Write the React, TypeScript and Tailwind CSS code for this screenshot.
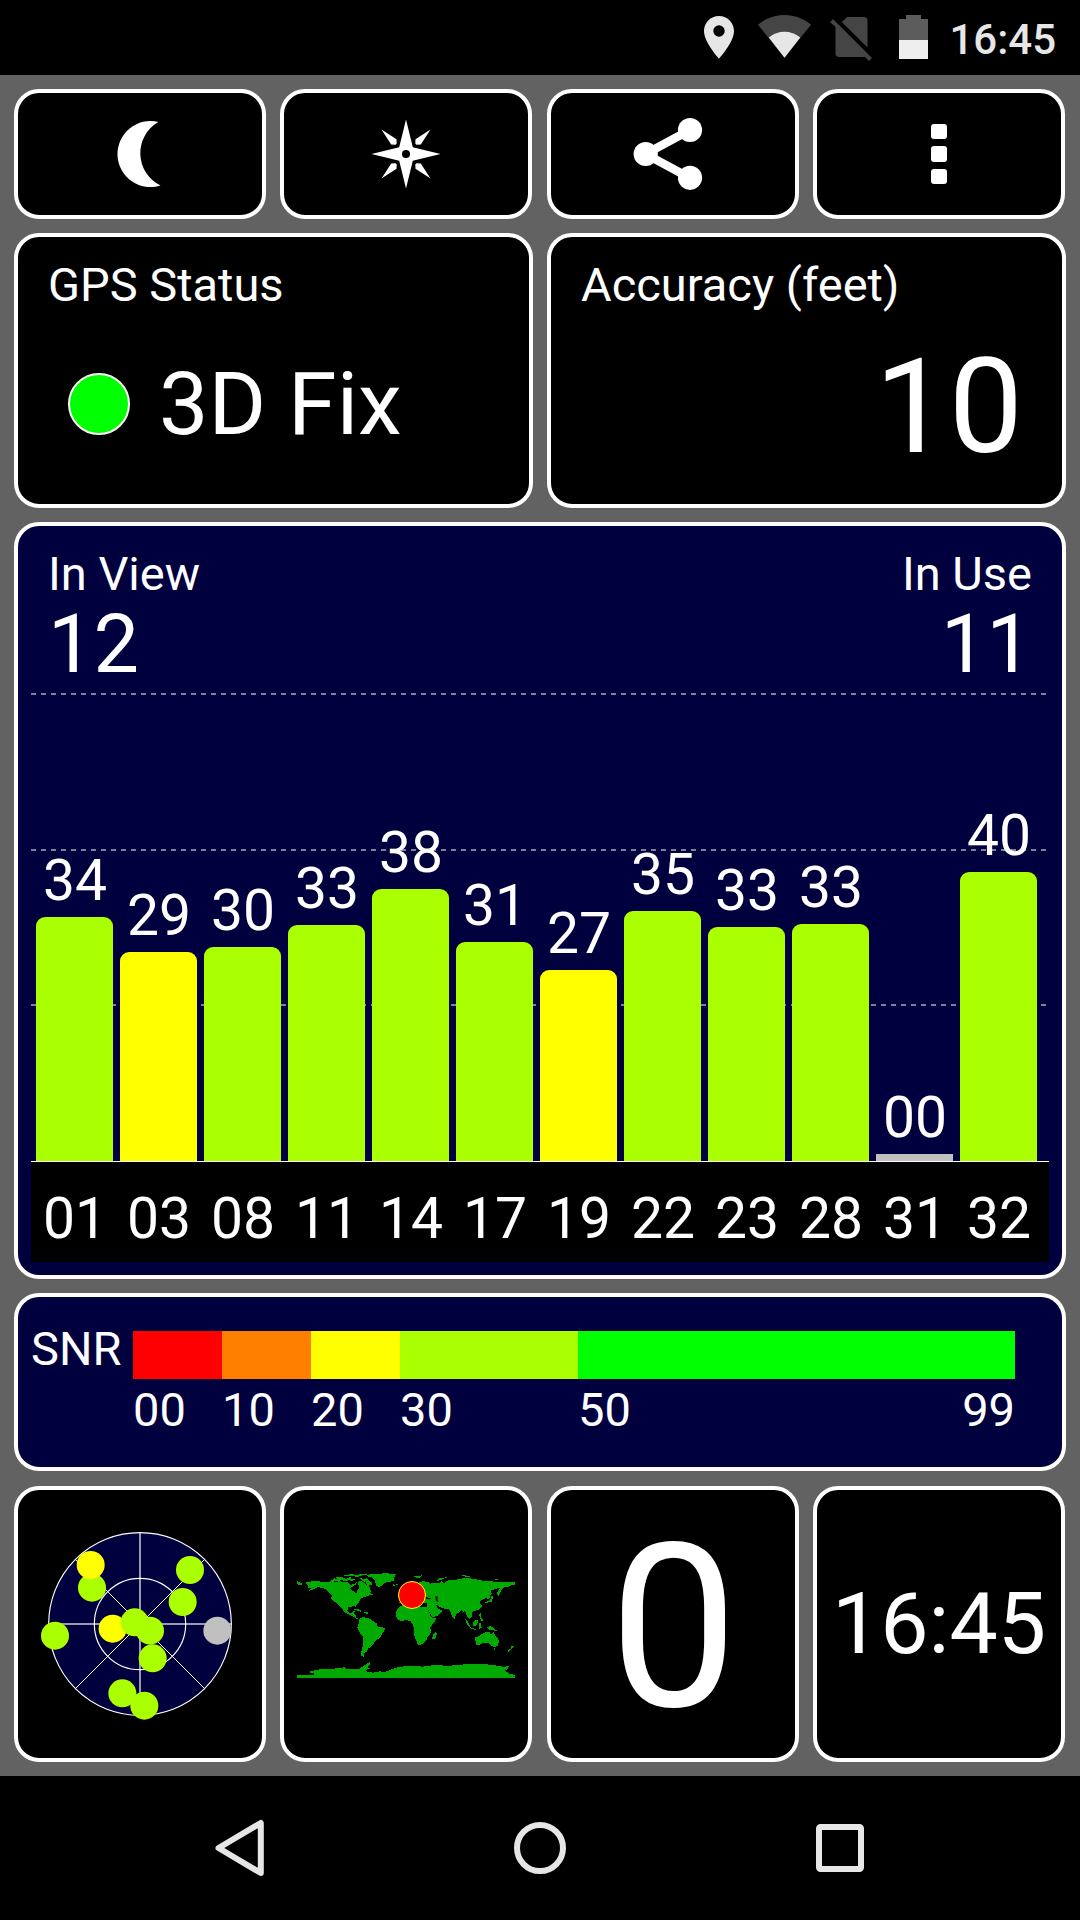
import type { ReactNode } from "react";
import clsx from "clsx";

type Satellite = {
  prn: string;
  snr: string;
  height: number;
  color: string;
};

const satellites: Satellite[] = [
  { prn: "01", snr: "34", height: 244, color: "bg-[#aaff00]" },
  { prn: "03", snr: "29", height: 209, color: "bg-[#ffff00]" },
  { prn: "08", snr: "30", height: 214, color: "bg-[#aaff00]" },
  { prn: "11", snr: "33", height: 236, color: "bg-[#aaff00]" },
  { prn: "14", snr: "38", height: 272, color: "bg-[#aaff00]" },
  { prn: "17", snr: "31", height: 219, color: "bg-[#aaff00]" },
  { prn: "19", snr: "27", height: 191, color: "bg-[#ffff00]" },
  { prn: "22", snr: "35", height: 250, color: "bg-[#aaff00]" },
  { prn: "23", snr: "33", height: 234, color: "bg-[#aaff00]" },
  { prn: "28", snr: "33", height: 237, color: "bg-[#aaff00]" },
  { prn: "31", snr: "00", height: 7, color: "bg-[#c0c0c0]" },
  { prn: "32", snr: "40", height: 289, color: "bg-[#aaff00]" },
];

const skyDots = [
  { x: 276, y: 323, fill: "#aaff00" },
  { x: 272, y: 255, fill: "#ffff00" },
  { x: 570, y: 270, fill: "#aaff00" },
  { x: 548, y: 366, fill: "#aaff00" },
  { x: 165, y: 467, fill: "#aaff00" },
  { x: 338, y: 446, fill: "#ffff00" },
  { x: 404, y: 427, fill: "#aaff00" },
  { x: 450, y: 452, fill: "#aaff00" },
  { x: 458, y: 535, fill: "#aaff00" },
  { x: 652, y: 452, fill: "#c0c0c0" },
  { x: 367, y: 640, fill: "#aaff00" },
  { x: 433, y: 677, fill: "#aaff00" },
];

const land = [
  // North America
  "M78 127 100 123 150 127 180 124 205 127 212 135 225 130 232 126 228 133 218 140 210 145 213 151 222 154 229 160 232 152 236 146 237 138 232 132 236 124 245 124 255 130 262 138 264 130 270 145 273 152 270 158 281 166 272 164 262 168 250 172 240 178 238 186 228 195 228 200 220 199 205 202 202 212 207 218 215 218 220 213 226 214 220 222 228 224 228 232 236 236 232 238 220 230 203 222 190 214 186 204 175 196 165 186 154 178 155 165 145 155 138 148 125 143 112 142 103 147 90 152 82 155 95 146 82 142 84 135 78 132Z",
  "M51 120 55 126 68 131 66 135 51 133Z",
  "M150 125 163 115 172 118 168 112 185 110 190 115 200 116 212 111 214 117 225 118 215 123 205 120 198 125 185 119 175 124Z",
  "M183 108 210 103 235 104 250 101 262 103 240 108 230 112 222 107 205 109Z",
  "M238 114 252 117 260 115 268 124 275 127 276 136 262 134 256 126 245 122Z",
  // Greenland, Iceland
  "M258 104 290 102 320 99 330 101 347 103 343 112 341 122 330 125 316 128 308 136 297 141 288 136 285 122 275 112 262 109Z",
  "M337 132 345 134 353 132 352 136 340 137Z",
  // Caribbean
  "M222 208 232 206 240 210 247 214 240 215 230 211Z",
  "M250 216 262 217 270 220 258 221Z",
  // South America
  "M238 236 250 231 268 236 278 243 290 250 293 260 308 262 316 266 310 276 305 283 301 293 288 300 282 310 275 318 265 325 260 335 254 338 252 345 253 351 242 346 244 335 247 325 250 308 250 290 240 280 232 262 237 248Z",
  // Africa
  "M358 200 372 194 395 192 412 195 420 200 440 200 447 215 452 228 458 234 471 233 462 248 450 262 453 274 449 284 442 292 438 303 428 313 414 315 408 300 402 285 403 268 398 252 390 242 375 241 362 244 354 238 348 228 350 210Z",
  "M468 275 471 282 465 298 457 297 458 285Z",
  // Eurasia
  "M358 190 360 178 372 176 378 165 395 150 410 130 430 123 450 128 452 134 456 128 480 128 484 123 492 129 500 122 520 120 540 117 560 113 580 117 600 120 610 123 630 122 650 127 670 125 705 126 705 135 695 135 685 141 672 142 664 152 655 168 650 162 660 143 645 148 632 150 635 160 630 168 628 176 616 175 602 181 600 190 606 198 598 208 585 212 577 215 574 222 577 230 568 238 562 230 557 220 556 214 550 215 546 210 540 215 530 222 524 230 524 238 517 232 508 208 500 206 485 205 470 194 468 196 474 205 488 212 475 226 457 232 448 215 440 203 440 190 425 188 415 180 400 180 380 190Z",
  // Japan
  "M632 168 640 170 637 180 635 186 622 188 612 190 624 183 632 178Z",
  // Southeast Asia
  "M556 238 564 246 574 264 568 262 560 250Z",
  "M575 264 590 267 588 270 574 267Z",
  "M578 247 592 238 594 246 588 258 580 257Z",
  "M597 222 602 220 604 234 610 240 606 246 600 236Z",
  "M596 248 604 248 602 256 606 262 598 268Z",
  "M613 256 622 261 630 258 643 265 645 268 653 274 640 271 630 270 622 265Z",
  // Australia, Tasmania, New Zealand
  "M586 292 600 287 610 279 620 275 628 276 634 284 640 274 646 287 655 297 657 306 652 318 645 322 634 317 626 310 612 308 595 315 587 313Z",
  "M641 325 648 326 645 331Z",
  "M695 315 702 320 696 327 685 336 682 333 692 326Z",
  // Arctic islands
  "M400 108 412 109 427 106 418 113 408 113Z",
  "M468 124 475 116 490 113 503 112 488 117 477 122Z",
  "M543 106 555 106 570 109 562 112Z",
  "M640 116 655 118 648 121Z",
  // Antarctica
  "M51 405 100 405 103 401 85 396 98 392 120 388 160 386 195 382 200 386 240 386 250 378 270 366 272 372 262 380 270 386 255 390 262 396 280 398 300 394 312 396 330 390 360 380 400 378 430 380 470 374 500 378 540 374 600 371 640 375 670 380 686 379 682 388 675 392 690 402 705 405 705 414 51 414Z",
].join("");

function Card({ className, children }: { className?: string; children?: ReactNode }) {
  return (
    <div className={clsx("rounded-[25px] border-4 border-white", className)}>{children}</div>
  );
}

function StatusBar() {
  return (
    <header className="flex h-[75px] bg-black pl-[703px] text-[#e6e6e6]">
      <svg className="mt-4 h-[43px] w-[31px]" viewBox="0 0 31 43">
        <path
          fill="#e6e6e6"
          fillRule="evenodd"
          d="M16 0C7.400 0 1 6.800 1 15c0 11.400 15 27.700 15 27.700S31 26.400 31 15C31 6.800 24.600 0 16 0zm0 9.300a5.700 5.700 0 1 1 0 11.400 5.700 5.700 0 0 1 0-11.400z"
        />
      </svg>
      <svg className="mt-[15px] ml-6 h-[43px] w-[53px]" viewBox="0 0 53 43">
        <path fill="#454545" d="M26.500 42.700 0 9.700C7.500 3.500 16.500 0 26.500 0S45.500 3.500 53 9.700z" />
        <path fill="#e6e6e6" d="M26.500 42.700 10.800 22.400c4.600-3.600 10-5.600 15.700-5.600s11.100 2 15.700 5.600z" />
      </svg>
      <svg className="mt-4 ml-[19px] h-[46px] w-[43px]" viewBox="0 0 43 46">
        <path fill="#454545" d="M17 1h17c2 0 3.500 1.500 3.500 3.500V31.500L11.800 6z" />
        <path fill="#454545" d="M3 3 42 42l-3 3-4-4H9c-2 0-3.500-1.500-3.500-3.500V11L0 6z" />
      </svg>
      <svg className="mt-[15px] ml-[26px] h-11 w-[29px]" viewBox="0 0 29 44">
        <path fill="#5c5c5c" d="M0 4h7V0h15v4h7v21H0z" />
        <path fill="#eeeeee" d="M0 25h29v19H0z" />
      </svg>
      <span className="ml-[21.5px] pt-[15px] text-[42px] leading-[50px] font-medium">16:45</span>
    </header>
  );
}

function Toolbar() {
  return (
    <div className="mr-px grid h-[130px] grid-cols-4 gap-[14.4px]">
      <Card className="flex items-center justify-center bg-black">
        <svg className="size-20" viewBox="-40 -40 80 80" fill="white">
          <path d="M18.300 -32A33 33 0 1 0 20.500 31.500A36 36 0 0 1 18.300 -32Z" />
        </svg>
      </Card>
      <Card className="flex items-center justify-center bg-black">
        <svg className="size-20" viewBox="-40 -40 80 80" fill="white">
          <path d="M0 -34.500 6.800 -6.800 34.500 0 6.800 6.800 0 34.500 -6.800 6.800 -34.500 0 -6.800 -6.800Z" />
          {[0, 90, 180, 270].map((angle) => (
            <path
              key={angle}
              transform={`rotate(${angle})`}
              d="M-24.500 -24.500 -9.500 -14.800 -9.300 -10.500 -10.500 -9.300 -14.800 -9.500Z"
            />
          ))}
          <circle r="4" fill="black" />
        </svg>
      </Card>
      <Card className="flex items-center justify-center bg-black">
        <svg className="size-20" viewBox="-40 -40 80 80" fill="white">
          <path d="M17 -24 -27.500 0 17 24" fill="none" stroke="white" strokeWidth="8.500" />
          <circle cx="-27.300" cy="0" r="12.100" />
          <circle cx="17" cy="-24" r="12.100" />
          <circle cx="17" cy="23.800" r="12.100" />
        </svg>
      </Card>
      <Card className="flex flex-col items-center justify-center gap-[7px] bg-black">
        <span className="size-[15.4px] rounded-[3px] bg-white" />
        <span className="size-[15.4px] rounded-[3px] bg-white" />
        <span className="size-[15.4px] rounded-[3px] bg-white" />
      </Card>
    </div>
  );
}

function Readouts() {
  return (
    <div className="grid h-[275px] grid-cols-2 gap-[14px]">
      <Card className="bg-black pt-5 pl-[30px]">
        <div className="text-[47px] leading-[56px]">GPS Status</div>
        <div className="mt-[39px] flex items-center pl-5">
          <span className="size-[62px] rounded-full border-2 border-white bg-[#00ff00]" />
          <span className="ml-[29px] text-[88px] leading-[104px]">3D Fix</span>
        </div>
      </Card>
      <Card className="bg-black pt-5 pr-[39px] pl-[30px]">
        <div className="text-[47px] leading-[56px]">Accuracy (feet)</div>
        <div className="mt-[14px] text-right text-[132px] leading-[160px]">10</div>
      </Card>
    </div>
  );
}

function SignalChart() {
  return (
    <Card className="h-[757px] bg-[#00003f] px-[13px] pb-[13px]">
      {/* Counters */}
      <div className="flex h-[167px] justify-between pt-5 pr-[17px] pl-[17px]">
        <div>
          <div className="text-[47px] leading-[56px]">In View</div>
          <div className="text-[81px] leading-[86px]">12</div>
        </div>
        <div className="text-right">
          <div className="text-[47px] leading-[56px]">In Use</div>
          <div className="text-[81px] leading-[86px]">11</div>
        </div>
      </div>

      {/* Bars */}
      <div className="relative flex h-[468px] items-end gap-[7px] pl-[5px]">
        <svg className="absolute top-0 left-0 h-[468px] w-[1018px]" viewBox="0 0 1018 468">
          {[1, 157, 312].map((y) => (
            <line
              key={y}
              x1="0"
              x2="1015"
              y1={y}
              y2={y}
              stroke="#7f7f9f"
              strokeWidth="2"
              strokeDasharray="5 5"
            />
          ))}
        </svg>
        {satellites.map((sat) => (
          <div key={sat.prn} className="relative w-[77px] text-center">
            <div className="pb-[2px] pl-px text-[57px] leading-[68px]">{sat.snr}</div>
            <div
              className={clsx(sat.snr !== "00" && "rounded-t-[9px]", sat.color)}
              style={{ height: sat.height }}
            />
          </div>
        ))}
      </div>

      {/* PRN axis */}
      <div className="flex h-[101px] items-center gap-[7px] border-t border-white bg-black pt-[14px] pl-[5px]">
        {satellites.map((sat) => (
          <div key={sat.prn} className="w-[77px] pl-px text-center text-[57px] leading-[68px]">
            {sat.prn}
          </div>
        ))}
      </div>
    </Card>
  );
}

function SnrLegend() {
  const bands = [
    { from: "00", className: "w-[89px]", color: "bg-[#ff0000]" },
    { from: "10", className: "w-[89px]", color: "bg-[#ff8000]" },
    { from: "20", className: "w-[89px]", color: "bg-[#ffff00]" },
    { from: "30", className: "w-[178px]", color: "bg-[#aaff00]" },
    { from: "50", className: "flex-1", color: "bg-[#00ff00]" },
  ];

  return (
    <Card className="flex h-[178px] bg-[#00003f] pt-[34px] pr-[47px] pl-[13px] text-[47px]">
      <div className="w-[102px] leading-[36px]">SNR</div>
      <div className="flex flex-1">
        {bands.map((band) => (
          <div key={band.from} className={band.className}>
            <div className={clsx("h-12", band.color)} />
            <div className="flex justify-between pt-[3px] leading-[56px]">
              <span>{band.from}</span>
              {band.from === "50" && <span>99</span>}
            </div>
          </div>
        ))}
      </div>
    </Card>
  );
}

function SkyPlot() {
  return (
    <svg className="h-[268px] w-[244px] shrink-0" viewBox="54 30 732 804">
      <circle cx="420" cy="432" r="274" fill="#00003f" stroke="white" strokeWidth="3.500" />
      <circle cx="420" cy="432" r="137" fill="none" stroke="white" strokeWidth="3.500" />
      <path d="M417 159h6v546h-6zM147 429h546v6H147z" fill="white" fillOpacity="0.600" />
      <path d="M227 239 613 625M613 239 227 625" stroke="white" strokeWidth="3" />
      {skyDots.map((dot) => (
        <circle key={`${dot.x}-${dot.y}`} cx={dot.x} cy={dot.y} r="42" fill={dot.fill} />
      ))}
    </svg>
  );
}

function WorldMap() {
  return (
    <svg className="h-[105px] w-[218px] shrink-0" viewBox="51 99 654 315">
      <path d={land} fill="#00aa00" shapeRendering="crispEdges" />
      {/* Black and Caspian seas */}
      <path d="M438 170 446 174 453 174 450 178 438 177ZM466 168 474 170 472 176 475 185 468 184Z" fill="black" />
      <circle cx="396" cy="165" r="40.500" fill="#ff0000" stroke="#ffff00" strokeWidth="3" />
    </svg>
  );
}

function Tiles() {
  return (
    <div className="mt-px mr-px grid h-[276px] grid-cols-4 grid-rows-1 gap-[14.4px]">
      <Card className="flex items-center justify-center bg-black">
        <SkyPlot />
      </Card>
      <Card className="flex items-center justify-center bg-black pt-[3px]">
        <WorldMap />
      </Card>
      <Card className="flex items-center justify-center bg-black pt-2 pl-[2px] text-[229px] leading-none">
        0
      </Card>
      <Card className="flex items-center justify-center bg-black text-[86px] leading-none">16:45</Card>
    </div>
  );
}

function NavBar() {
  return (
    <nav className="flex h-36 items-center justify-center gap-[240px] bg-black">
      <svg className="size-[60px]" viewBox="-30 -30 60 60" fill="none" stroke="#e6e6e6">
        <path d="M-21.500 0 20.800 -25V25Z" strokeWidth="6" strokeLinejoin="round" />
      </svg>
      <svg className="size-[60px]" viewBox="-30 -30 60 60" fill="none" stroke="#e6e6e6">
        <circle r="23" strokeWidth="6" />
      </svg>
      <svg className="size-[60px]" viewBox="-30 -30 60 60" fill="none" stroke="#e6e6e6">
        <rect x="-21" y="-21" width="42" height="42" rx="1.500" strokeWidth="6" />
      </svg>
    </nav>
  );
}

export default function App() {
  return (
    <div className="flex h-[1920px] w-[1080px] flex-col overflow-hidden bg-[#626262] font-['Roboto',sans-serif] text-white">
      <StatusBar />
      <main className="flex h-[1701px] flex-col gap-[14px] p-[14px]">
        <Toolbar />
        <Readouts />
        <SignalChart />
        <SnrLegend />
        <Tiles />
      </main>
      <NavBar />
    </div>
  );
}
